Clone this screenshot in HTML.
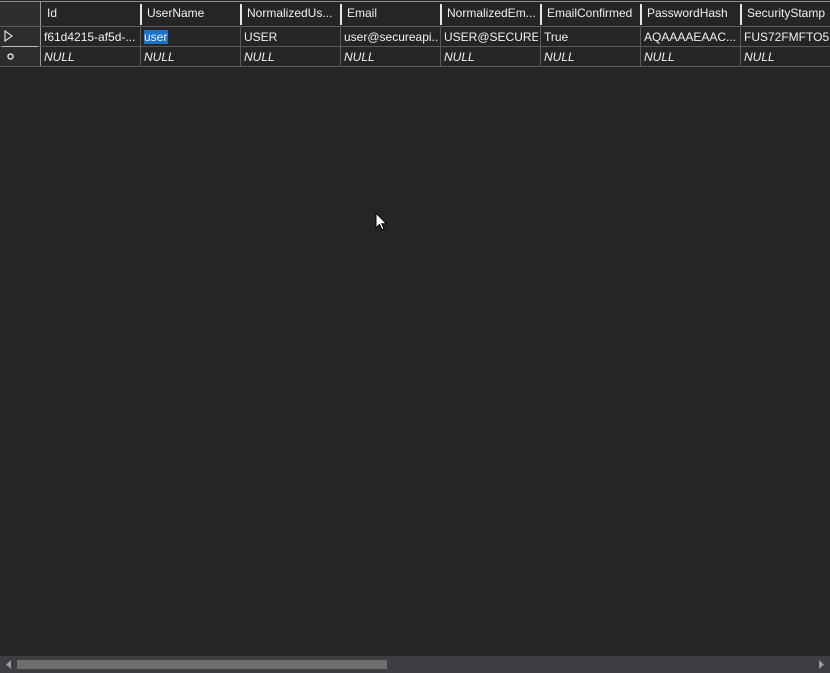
<!DOCTYPE html><html><head><style>
body{margin:0;width:830px;height:673px;background:#252526;font-family:"Liberation Sans",sans-serif;font-size:12px;color:#f1f1f1;position:relative;overflow:hidden}
.a{position:absolute}
.hd{top:2px;height:24px;background:#252526;border-top:1px solid #8a8a8a}
.c{position:absolute;white-space:nowrap;overflow:hidden;padding-left:3px;box-sizing:border-box}
.i{font-style:italic}
</style></head><body>
<div class="a" style="left:0;top:0;width:830px;height:67px;background:#252526"></div>
<div class="a" style="left:0;top:1px;width:830px;height:1px;background:#8a8a8a"></div>
<div class="a" style="left:0;top:2px;width:41px;height:65px;background:#2d2d30"></div>
<div class="a" style="left:40px;top:2px;width:1px;height:65px;background:#9a9a9a"></div>
<div class="a" style="left:0;top:26px;width:830px;height:1px;background:#5a5a5a"></div>
<div class="a" style="left:0;top:46px;width:830px;height:1px;background:#5a5a5a"></div>
<div class="a" style="left:0;top:66px;width:830px;height:1px;background:#5a5a5a"></div>
<div class="a" style="left:2px;top:46px;width:36px;height:1px;background:#bbb"></div>
<svg class="a" style="left:4px;top:30px" width="10" height="12"><path d="M1 1 L8 6 L1 11 Z" fill="none" stroke="#ddd" stroke-width="1.2"/></svg>
<svg class="a" style="left:6px;top:52px" width="9" height="9"><circle cx="4.5" cy="4.5" r="2.5" fill="none" stroke="#ddd" stroke-width="1.5"/></svg>
<div id="g"></div>
<script>
var h=["Id","UserName","NormalizedUs...","Email","NormalizedEm...","EmailConfirmed","PasswordHash","SecurityStamp"];
var r=["f61d4215-af5d-...","user","USER","user@secureapi...","USER@SECURE...","True","AQAAAAEAAC...","FUS72FMFTO5..."];
var s="";
for(var k=0;k<8;k++){var x=41+k*100;
s+='<div class="c" style="left:'+(x+3)+'px;top:6px;width:96px">'+h[k]+'</div>';
if(k<7)s+='<div class="a" style="left:'+(x+99)+'px;top:4px;width:2px;height:21px;background:#e8e8e8"></div>';
s+='<div class="a" style="left:'+(x+99)+'px;top:26px;width:1px;height:41px;background:#5a5a5a"></div>';
if(k==1)s+='<div class="a" style="left:'+(x+3)+'px;top:30px;height:14px;width:24px;background:#1a73c9"></div>';
s+='<div class="c" style="left:'+x+'px;top:30px;width:97px">'+r[k]+'</div>';
if(r[k]!=="")s+='<div class="c i" style="left:'+x+'px;top:50px;width:97px">NULL</div>';}
document.getElementById("g").innerHTML=s;
</script>
<div class="a" style="left:0;top:656px;width:830px;height:17px;background:#3e3e42"></div>
<div class="a" style="left:17px;top:660px;width:370px;height:9px;background:#6e6e6e"></div>
<svg class="a" style="left:4px;top:659px" width="8" height="11"><path d="M7 1 L2 5.5 L7 10 Z" fill="#999"/></svg>
<svg class="a" style="left:818px;top:659px" width="8" height="11"><path d="M1 1 L6 5.5 L1 10 Z" fill="#999"/></svg>
<svg class="a" style="left:375px;top:212px" width="14" height="20"><path d="M1 1 L1 16 L4.5 12.5 L7 18 L9 17 L6.8 11.8 L11.5 11.8 Z" fill="#fff" stroke="#000" stroke-width="1"/></svg>
</body></html>
